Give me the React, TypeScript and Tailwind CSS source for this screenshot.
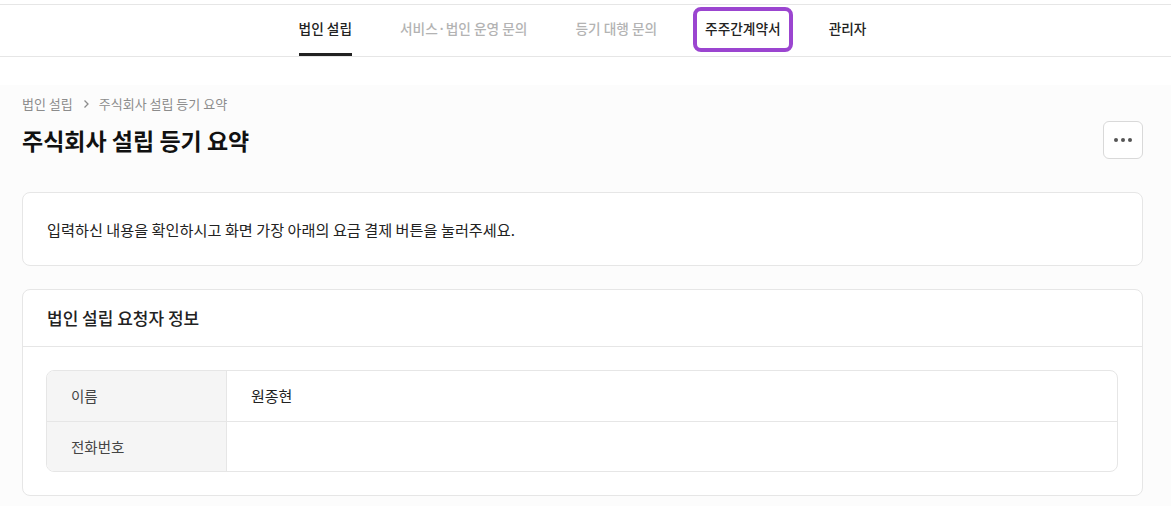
import React from 'react';

const font = { fontFamily: '"Noto Sans CJK KR", "Noto Sans", sans-serif' };

interface NavItem {
  label: string;
  active?: boolean;
  muted?: boolean;
  highlight?: boolean;
}

const navItems: NavItem[] = [
  { label: '법인 설립', active: true },
  { label: '서비스·법인 운영 문의', muted: true },
  { label: '등기 대행 문의', muted: true },
  { label: '주주간계약서', highlight: true },
  { label: '관리자' },
];

const rows = [
  { label: '이름', value: '원종현' },
  { label: '전화번호', value: '' },
];

const TopNav: React.FC = () => (
  <div className="pt-1">
    <nav className="flex h-[53px] justify-center gap-12 border-y border-[#e6e6e6] bg-white pr-[6px]">
      {navItems.map(item => (
        <div key={item.label} className="relative flex h-full items-center pb-[4px]">
          <span
            className={
              'text-[13.7px] font-medium ' + (item.muted ? 'text-[#b3b3b3]' : 'text-[#222]')
            }
          >
            {item.label}
          </span>
          {item.active && <span className="absolute bottom-0 left-0 right-0 h-[3px] bg-[#222]" />}
          {item.highlight && (
            <span className="pointer-events-none absolute -left-3 -right-3 top-[2px] bottom-[4px] rounded-[8px] border-[4px] border-[#9b45d0]" />
          )}
        </div>
      ))}
    </nav>
  </div>
);

const App: React.FC = () => {
  return (
    <div className="min-h-screen bg-white text-[#222]" style={font}>
      <TopNav />

      <main className="mt-7 bg-[#fcfcfc] pb-4 pl-[22px] pr-[28px] pt-[10px]">
        {/* breadcrumb */}
        <div className="flex items-center gap-[7px] text-[13px] leading-[18px] text-[#8c8c8c]">
          <span>법인 설립</span>
          <svg width="10" height="10" viewBox="0 0 10 10" className="mx-[1px]">
            <path d="M3.5 1.5 L7 5 L3.5 8.5" fill="none" stroke="#8c8c8c" strokeWidth="1.3" />
          </svg>
          <span>주식회사 설립 등기 요약</span>
        </div>

        <div className="mt-2 flex items-center justify-between">
          <h1 className="text-[23px] font-bold leading-[32px] text-[#111]">주식회사 설립 등기 요약</h1>
          <button className="flex h-[38px] w-[40px] items-center justify-center gap-[3px] rounded-[6px] border border-[#d9d9d9] bg-white">
            <span className="h-[4px] w-[4px] rounded-full bg-[#555]" />
            <span className="h-[4px] w-[4px] rounded-full bg-[#555]" />
            <span className="h-[4px] w-[4px] rounded-full bg-[#555]" />
          </button>
        </div>

        <section className="mt-[33px] rounded-[8px] border border-[#e6e6e6] bg-white px-6 py-[26px]">
          <p className="text-[15.2px] leading-[20px]">
            입력하신 내용을 확인하시고 화면 가장 아래의 요금 결제 버튼을 눌러주세요.
          </p>
        </section>

        <section className="mt-[23px] rounded-[8px] border border-[#e6e6e6] bg-white">
          <div className="border-b border-[#e6e6e6] px-6 py-4">
            <h2 className="text-[17px] font-medium leading-[24px]">법인 설립 요청자 정보</h2>
          </div>
          <div className="pb-[23px] pl-[23px] pr-6 pt-[23px]">
            <div className="overflow-hidden rounded-[8px] border border-[#e6e6e6]">
              {rows.map((row, i) => (
                <div
                  key={row.label}
                  className={'flex h-[50px] ' + (i > 0 ? 'border-t border-[#e6e6e6]' : '')}
                >
                  <div className="flex w-[180px] items-center border-r border-[#e6e6e6] bg-[#f5f5f5] px-6 text-[14.5px] text-[#444]">
                    {row.label}
                  </div>
                  <div className="flex flex-1 items-center px-6 text-[15px]">{row.value}</div>
                </div>
              ))}
            </div>
          </div>
        </section>
      </main>
    </div>
  );
};

export default App;
